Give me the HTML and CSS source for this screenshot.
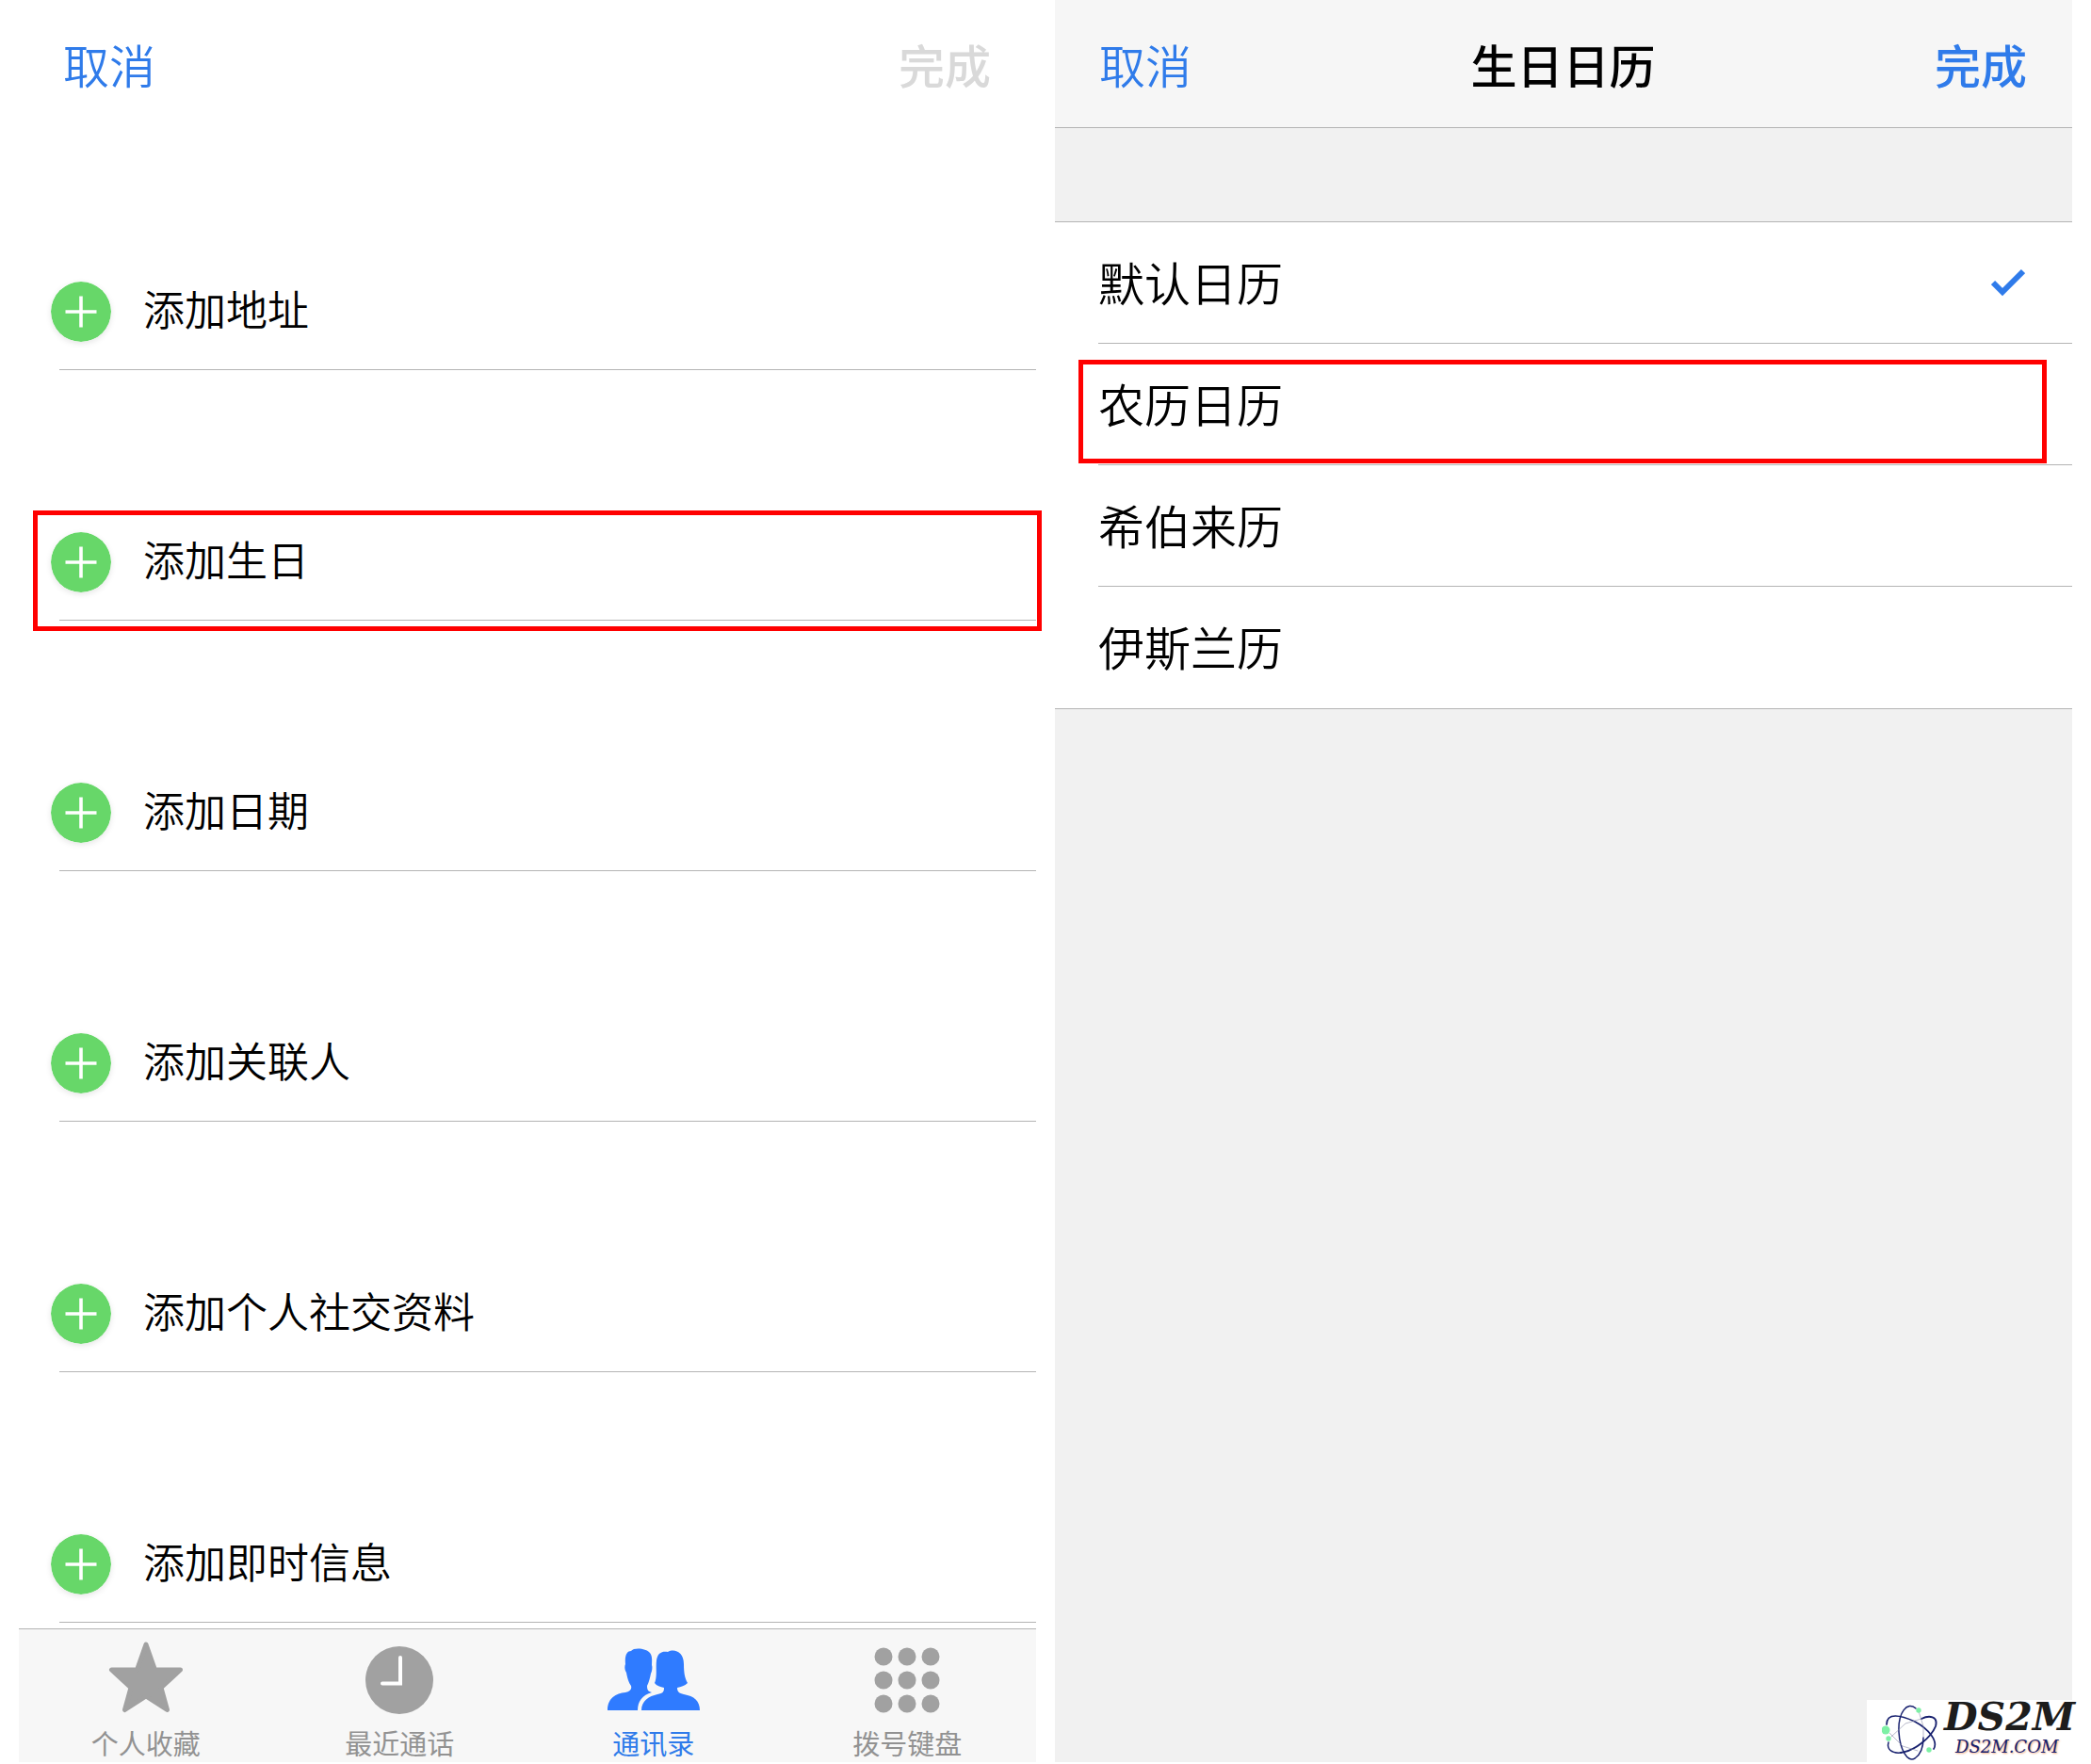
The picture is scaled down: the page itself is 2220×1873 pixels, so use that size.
FILE: index.html
```html
<!DOCTYPE html>
<html lang="zh-CN">
<head>
<meta charset="utf-8">
<meta name="viewport" content="width=device-width, initial-scale=1">
<title>生日日历</title>
<link rel="stylesheet" href="styles.css">
</head>
<body>
<svg class="defs" aria-hidden="true">
  <symbol id="plus" viewBox="0 0 64 64"><circle cx="32" cy="32" r="32" fill="#67d769"/><path d="M32 15.500V48.500M15.500 32H48.500" stroke="#fff" stroke-width="3.600"/></symbol>
</svg>
<main class="screens">
  <section class="screen contact">
    <header class="bar">
      <button type="button" class="action">取消</button>
      <button type="button" class="action done" disabled>完成</button>
    </header>
    <ul class="fields">
      <li class="field"><button type="button" class="add"><svg class="plus"><use href="#plus"/></svg><span class="label">添加地址</span></button></li>
      <li class="field marked"><button type="button" class="add"><svg class="plus"><use href="#plus"/></svg><span class="label">添加生日</span></button></li>
      <li class="field"><button type="button" class="add"><svg class="plus"><use href="#plus"/></svg><span class="label">添加日期</span></button></li>
      <li class="field"><button type="button" class="add"><svg class="plus"><use href="#plus"/></svg><span class="label">添加关联人</span></button></li>
      <li class="field"><button type="button" class="add"><svg class="plus"><use href="#plus"/></svg><span class="label">添加个人社交资料</span></button></li>
      <li class="field"><button type="button" class="add"><svg class="plus"><use href="#plus"/></svg><span class="label">添加即时信息</span></button></li>
    </ul>
    <nav class="tabs">
      <a href="#favorites" class="tab">
        <svg class="icon" viewBox="0 0 100 80"><path d="M50 7L59.500 34H86.500L66 53L72.500 76.500L50 62L27.500 76.500L34 53L13.500 34H40.500Z" fill="#a1a1a1" stroke="#a1a1a1" stroke-width="5" stroke-linejoin="round"/></svg>
        个人收藏
      </a>
      <a href="#recents" class="tab">
        <svg class="icon" viewBox="0 0 100 80"><circle cx="50" cy="45" r="36" fill="#a1a1a1"/><path d="M51 21V48.500H32" fill="none" stroke="#fff" stroke-width="4" stroke-linecap="round"/></svg>
        最近通话
      </a>
      <a href="#contacts" class="tab current">
        <svg class="icon" viewBox="0 0 100 80"><path d="M1 77C1 64 10 59 20 58C25 57 27 55 26 51C23 47 22 42 21 37C19 34 19 30 20 28C19 18 22 14 26 14C29 10 42 11 46 16C49 20 48 25 48 29C49 32 48 36 47 38C46 43 45 47 43 51C43 55 44 57 48 58C38 61 33 67 33 77Z" fill="#2f7bff"/><path d="M37 77C37 67 45 62 54 60C60 59 61 57 61 53C57 52 53 51 51 48C54 41 52 32 53 24C54 16 59 14 65 15C72 11 82 15 82 28C82 37 83 43 86 48C83 51 79 52 75 53C75 57 77 59 82 60C93 62 99 67 99 77Z" fill="#2f7bff"/></svg>
        通讯录
      </a>
      <a href="#keypad" class="tab">
        <svg class="icon" viewBox="0 0 100 80"><g fill="#a1a1a1"><circle cx="25" cy="20" r="9.500"/><circle cx="50" cy="20" r="9.500"/><circle cx="75" cy="20" r="9.500"/><circle cx="25" cy="45" r="9.500"/><circle cx="50" cy="45" r="9.500"/><circle cx="75" cy="45" r="9.500"/><circle cx="25" cy="70" r="9.500"/><circle cx="50" cy="70" r="9.500"/><circle cx="75" cy="70" r="9.500"/></g></svg>
        拨号键盘
      </a>
    </nav>
  </section>
  <section class="screen calendars">
    <header class="bar titled">
      <button type="button" class="action">取消</button>
      <h1 class="title">生日日历</h1>
      <button type="button" class="action done">完成</button>
    </header>
    <ul class="options">
      <li class="option"><button type="button" class="choice"><span class="label">默认日历</span><svg class="check" viewBox="0 0 36 30"><path d="M2 15L12 25L34 3" fill="none" stroke="#2f7bea" stroke-width="6"/></svg></button></li>
      <li class="option marked"><button type="button" class="choice"><span class="label">农历日历</span></button></li>
      <li class="option"><button type="button" class="choice"><span class="label">希伯来历</span></button></li>
      <li class="option"><button type="button" class="choice"><span class="label">伊斯兰历</span></button></li>
    </ul>
  </section>
</main>
<aside class="watermark">
  <svg class="atom" viewBox="0 0 62 66" fill="none" stroke="#17206e" stroke-linecap="round">
    <path d="M36 7C27 -1 17 11 18 32C19 50 27 65 35 60C41 56 44 48 44 38" stroke-width="1.500"/>
    <path d="M5 24C5 11 20 14 35 21C50 29 60 42 55 50" stroke-width="1.700"/>
    <path d="M20 54C35 52 52 38 57 26C60 15 50 14 42 18" stroke-width="1.900"/>
    <path d="M7 43C5 50 10 55 20 54" stroke-width="1.500"/>
    <path d="M8 33L22 47L38 52M10 37L25 23L42 18M44 38L44 26L39 10" stroke-width=".6" stroke="#8a8ca8"/>
    <g fill="#7df0a5" stroke="none"><circle cx="39" cy="9" r="2.700"/><circle cx="4" cy="30" r="4.500"/><circle cx="7" cy="39" r="2.700"/><circle cx="50" cy="51" r="2.700"/></g>
  </svg>
  <div class="brand"><strong class="name">DS2M</strong><span class="site">DS2M.COM</span></div>
</aside>
</body>
</html>
```

FILE: styles.css
```css
*, *::after { box-sizing: border-box; }
body {
  margin: 0;
  background: #fff;
  color: #000;
  font-family: "Noto Sans CJK SC", sans-serif;
  font-weight: 350;
}
button {
  padding: 0;
  border: 0;
  background: none;
  color: inherit;
  font: inherit;
}
ul { margin: 0; padding: 0; list-style: none; }
.defs { display: none; }
.screens {
  display: grid;
  grid-template-columns: 1fr 1fr;
  gap: 20px;
  min-height: 100vh;
  padding: 0 20px 2px;
}
.screen { display: flex; flex-direction: column; }
.bar {
  display: flex;
  align-items: center;
  justify-content: space-between;
  height: 136px;
  padding: 0 48px 0 47px;
  font-size: 49px;
  line-height: 72px;
}
.action { color: #2f7bea; }
.action.done { font-weight: 500; }
.action:disabled { color: #d9d9d9; }
.titled {
  background: #f6f6f6;
  border-bottom: 1px solid #b4b4b4;
}
.title { margin: 0; font-size: 49px; font-weight: 500; }

.field {
  position: relative;
  display: flex;
  align-items: flex-end;
  height: 266px;
  margin-left: 43px;
  border-bottom: 1px solid #b4b4b4;
}
.field:first-child { height: 257px; }
.add {
  display: flex;
  flex: 1;
  align-items: center;
  gap: 34px;
  height: 122px;
  margin-left: -9px;
  font-size: 44px;
}
.add .label { padding-bottom: 8px; }
.plus {
  width: 64px;
  height: 64px;
  border-radius: 50%;
  box-shadow: 0 2px 6px #0000001a;
}
.marked::after {
  content: "";
  position: absolute;
  border: 5px solid #f00;
  pointer-events: none;
}
.field.marked::after { inset: auto -6px -12px -28px; height: 128px; }

.tabs {
  display: grid;
  grid-template-columns: repeat(4, 1fr);
  flex: 1;
  margin-top: 6px;
  padding-right: 2px;
  border-top: 1px solid #b4b4b4;
  background: #f7f7f7;
}
.tab {
  display: flex;
  flex-direction: column;
  align-items: center;
  gap: 10px;
  padding-top: 9px;
  color: #929292;
  font-size: 29px;
  font-weight: 400;
  line-height: 42px;
  text-decoration: none;
}
.tab.current { color: #2f7bea; }
.icon { width: 100px; height: 80px; overflow: visible; }

.calendars { background: #f1f1f1; }
.options {
  margin-top: 99px;
  border: solid #b4b4b4;
  border-width: 1px 0;
  background: #fff;
}
.option { position: relative; padding-left: 46px; }
.choice {
  display: flex;
  align-items: center;
  justify-content: space-between;
  width: 100%;
  height: 129px;
  padding-right: 50px;
  border-bottom: 1px solid #b4b4b4;
  font-size: 49px;
}
.choice .label { padding-bottom: 4px; }
.option:last-child .choice { border-bottom-color: transparent; }
.check { width: 36px; height: 30px; }
.option.marked::after { inset: 17px 27px 2px 25px; }

.watermark {
  position: absolute;
  top: 1805px;
  right: 0;
  display: flex;
  gap: 16px;
  width: 238px;
  height: 68px;
  padding-left: 16px;
  background: #fff;
}
.atom { width: 62px; height: 66px; margin-top: 2px; }
.brand {
  display: flex;
  flex-direction: column;
  margin-left: -12px;
  font-family: "DejaVu Serif", serif;
  font-style: italic;
}
.name { color: #1d1d1d; font-size: 41px; line-height: 36px; }
.site {
  padding-left: 12px;
  color: #17206e;
  font-size: 18px;
  line-height: 28px;
  text-shadow: 1px 1px 2px #f0a070;
}
```
